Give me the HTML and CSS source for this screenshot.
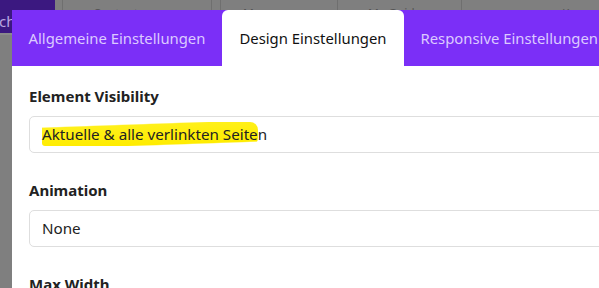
FILE: index.html
```html
<!DOCTYPE html>
<html lang="de">
<head>
<meta charset="utf-8">
<link rel="stylesheet" href="styles.css">
</head>
<body>
<div class="backdrop">
  <div class="topbar">
    <div class="brand">ch</div>
    <div class="cell c1"></div>
    <div class="cell c2"><span class="ghost">Content</span></div>
    <div class="cell c3"></div>
    <div class="cell c4"><span class="ghost">Manage</span></div>
    <div class="cell c5"><span class="ghost">My Guide</span></div>
    <div class="cell c6"><span class="ghost">K</span></div>
  </div>
</div>
<div class="modal">
  <div class="tabs">
    <div class="tab">Allgemeine Einstellungen</div>
    <div class="tab active">Design Einstellungen</div>
    <div class="tab">Responsive Einstellungen</div>
  </div>
  <div class="body">
    <div class="field">
      <div class="label">Element Visibility</div>
      <div class="input"><span class="mark">Aktuelle &amp; alle verlinkten Seite</span>n</div>
    </div>
    <div class="field">
      <div class="label">Animation</div>
      <div class="input">None</div>
    </div>
    <div class="field">
      <div class="label">Max Width</div>
      <div class="input"></div>
    </div>
  </div>
</div>
</body>
</html>
```

FILE: styles.css
```css
html, body {
  margin: 0;
  padding: 0;
}
body {
  width: 599px;
  height: 288px;
  overflow: hidden;
  background: #7f7f7f;
  font-family: "Noto Sans", "Open Sans", sans-serif;
  position: relative;
}
.backdrop {
  height: 288px;
}
.topbar {
  display: flex;
  height: 33px;
  border-bottom: 2px solid #8a8a8a;
}
.brand {
  width: 55px;
  background: #3b1880;
  color: #b9a6e0;
  font-size: 15px;
  padding-top: 10px;
  box-sizing: border-box;
  line-height: 23px;
  text-indent: -1px;
}
.cell {
  border-right: 1px solid #6f6f6f;
  color: #555555;
  font-size: 12px;
  box-sizing: border-box;
}
.c1 { width: 8px; }
.c2 { width: 149px; padding-left: 30px; }
.c3 { width: 9px; }
.c4 { width: 117px; padding-left: 22px; }
.c5 { width: 124px; padding-left: 30px; }
.c6 { flex: 1; border-right: 0; padding-left: 100px; }
.ghost {
  display: block;
  margin-top: 5px;
}
.modal {
  position: absolute;
  left: 12px;
  top: 10px;
  width: 640px;
  height: 300px;
  background: #ffffff;
}
.tabs {
  display: flex;
  height: 56px;
  background: #7b2ff7;
}
.tab {
  padding: 0 16.5px;
  line-height: 56px;
  font-size: 14.85px;
  color: #dccaff;
  white-space: nowrap;
}
.tab.active {
  background: #ffffff;
  color: #111111;
  border-radius: 6px 6px 0 0;
  padding: 0 17.5px;
}
.body {
  padding: 20px 0 0 17px;
}
.field {
  margin-bottom: 27px;
}
.label {
  font-size: 15px;
  font-weight: 700;
  color: #222222;
  line-height: 20px;
  margin-bottom: 10px;
}
.input {
  height: 37px;
  box-sizing: border-box;
  border: 1px solid #dedede;
  border-radius: 5px;
  padding: 0 12px;
  font-size: 15.2px;
  line-height: 35px;
  color: #222222;
  width: 620px;
}
.mark {
  background: linear-gradient(178deg, transparent 16%, #fff01a 20%, #ffec00 84%, transparent 88%);
  border-radius: 3px 8px 8px 3px;
  padding: 2px 0;
}
```
